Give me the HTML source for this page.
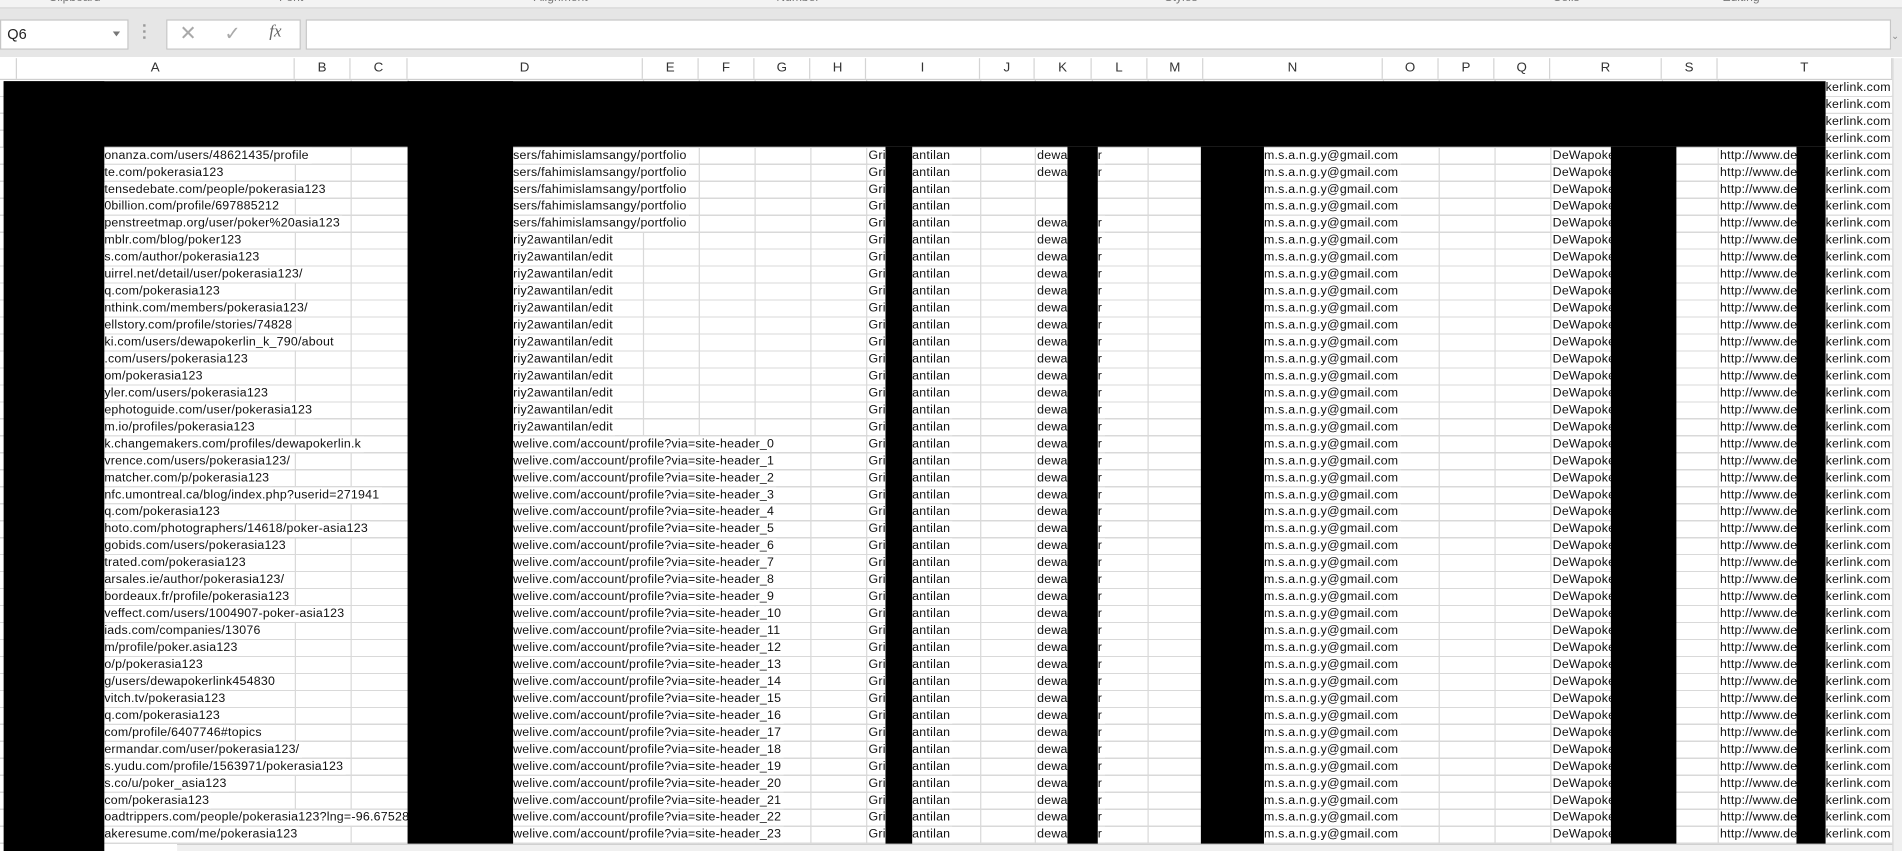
<!DOCTYPE html>
<html><head><meta charset="utf-8">
<style>
html,body{margin:0;padding:0;width:1902px;height:851px;overflow:hidden;background:#fff;}
#s{position:absolute;left:0;top:0;width:1568px;height:702px;transform-origin:0 0;transform:scale(1.21301,1.2123);font-family:"Liberation Sans",sans-serif;background:#fff;overflow:hidden;}
.abs{position:absolute;}
#rib{left:0;top:0;width:1568px;height:6px;background:#f3f3f3;border-bottom:1px solid #d6d6d6;}
#rib span{position:absolute;top:-7px;font-size:10px;color:#777;}
#gap{left:0;top:7px;width:1568px;height:40px;background:#e6e6e6;}
#nb{left:0;top:16px;width:104px;height:23px;background:#fff;border:1px solid #c6c6c6;font-size:12px;line-height:23px;text-indent:5px;color:#222;}
#nb i{position:absolute;right:6px;top:9px;border-left:3px solid transparent;border-right:3px solid transparent;border-top:4px solid #777;}
#fb{left:137px;top:16px;width:109px;height:23px;background:#fff;border:1px solid #c6c6c6;}
#fi{left:252px;top:16px;width:1305px;height:23px;background:#fff;border:1px solid #c6c6c6;}
#hdr{left:0;top:48px;width:1560px;height:17px;background:#fff;border-bottom:1px solid #cfcfcf;}
.ch{position:absolute;top:0;height:17px;line-height:17px;text-align:center;font-size:11px;color:#333;border-right:1px solid #d4d4d4;box-sizing:border-box;}
#grid{left:0;top:66px;width:1560px;height:636px;background-image:repeating-linear-gradient(to bottom,transparent 0,transparent 13px,#d9d9d9 13px,#d9d9d9 14px);}
.vl{position:absolute;top:66px;width:1px;height:636px;background:#d9d9d9;}
.r{position:absolute;left:0;width:1560px;height:13px;font-size:10.2px;line-height:13px;color:#111;letter-spacing:0.2px;}
.r span{position:absolute;top:0;background:#fff;white-space:nowrap;padding-right:2px;}
.a{left:86px}.d{left:423px}.i1{left:716px}.i2{left:752px}.k1{left:855px}.k2{left:905px}.n{left:1042px}.rr{left:1280px}.t1{left:1418px}.t2{left:1505px}
.b{position:absolute;background:#000;}
#vs{left:1560px;top:48px;width:8px;height:654px;background:#f0f0f0;border-left:1px solid #d6d6d6;}
#hs{left:146px;top:696px;width:1414px;height:6px;background:#f0f0f0;border-top:1px solid #cfcfcf;}
</style></head><body><div id="s">
<div id="rib" class="abs"><span style="left:40px">Clipboard</span><span style="left:230px">Font</span><span style="left:440px">Alignment</span><span style="left:640px">Number</span><span style="left:960px">Styles</span><span style="left:1280px">Cells</span><span style="left:1420px">Editing</span></div>
<div id="gap" class="abs"></div>
<div id="nb" class="abs">Q6<i></i></div>
<div class="abs" style="left:118px;top:20px;width:2px;height:2px;background:#999;box-shadow:0 5px 0 #999,0 10px 0 #999"></div>
<div id="fb" class="abs"><span class="abs" style="left:10px;top:1px;font-size:17px;color:#aaa">&#x2715;</span><span class="abs" style="left:47px;top:1px;font-size:16px;color:#aaa">&#x2713;</span><span class="abs" style="left:84px;top:2px;font-size:14px;color:#666;font-style:italic;font-family:'Liberation Serif',serif">fx</span></div>
<div id="fi" class="abs"></div>
<div class="abs" style="left:1559px;top:25px;font-size:8px;color:#888">&#x2304;</div>
<div id="hdr" class="abs">
<div class="ch" style="left:0;width:14px;"></div>
<div class="ch" style="left:14px;width:229px">A</div><div class="ch" style="left:243px;width:46px">B</div><div class="ch" style="left:289px;width:47px">C</div><div class="ch" style="left:336px;width:194px">D</div><div class="ch" style="left:530px;width:46px">E</div><div class="ch" style="left:576px;width:46px">F</div><div class="ch" style="left:622px;width:46px">G</div><div class="ch" style="left:668px;width:46px">H</div><div class="ch" style="left:714px;width:94px">I</div><div class="ch" style="left:808px;width:45px">J</div><div class="ch" style="left:853px;width:47px">K</div><div class="ch" style="left:900px;width:46px">L</div><div class="ch" style="left:946px;width:46px">M</div><div class="ch" style="left:992px;width:148px">N</div><div class="ch" style="left:1140px;width:46px">O</div><div class="ch" style="left:1186px;width:46px">P</div><div class="ch" style="left:1232px;width:46px">Q</div><div class="ch" style="left:1278px;width:92px">R</div><div class="ch" style="left:1370px;width:46px">S</div><div class="ch" style="left:1416px;width:144px">T</div>
</div>
<div id="grid" class="abs"></div>
<div class="vl" style="left:243px"></div><div class="vl" style="left:289px"></div><div class="vl" style="left:336px"></div><div class="vl" style="left:530px"></div><div class="vl" style="left:576px"></div><div class="vl" style="left:622px"></div><div class="vl" style="left:668px"></div><div class="vl" style="left:714px"></div><div class="vl" style="left:808px"></div><div class="vl" style="left:853px"></div><div class="vl" style="left:900px"></div><div class="vl" style="left:946px"></div><div class="vl" style="left:992px"></div><div class="vl" style="left:1140px"></div><div class="vl" style="left:1186px"></div><div class="vl" style="left:1232px"></div><div class="vl" style="left:1278px"></div><div class="vl" style="left:1370px"></div><div class="vl" style="left:1416px"></div><div class="vl" style="left:1559px"></div>

<div class="r" style="top:66px"><span class="t2">kerlink.com</span></div>
<div class="r" style="top:80px"><span class="t2">kerlink.com</span></div>
<div class="r" style="top:94px"><span class="t2">kerlink.com</span></div>
<div class="r" style="top:108px"><span class="t2">kerlink.com</span></div>

<div class="r" style="top:122px"><span class="a">onanza.com/users/48621435/profile</span><span class="d">sers/fahimislamsangy/portfolio</span><span class="i1">Gri</span><span class="i2">antilan</span><span class="k1">dewa</span><span class="k2">r</span><span class="n">m.s.a.n.g.y@gmail.com</span><span class="rr">DeWapoke</span><span class="t1">http://www.de</span><span class="t2">kerlink.com</span></div>
<div class="r" style="top:136px"><span class="a">te.com/pokerasia123</span><span class="d">sers/fahimislamsangy/portfolio</span><span class="i1">Gri</span><span class="i2">antilan</span><span class="k1">dewa</span><span class="k2">r</span><span class="n">m.s.a.n.g.y@gmail.com</span><span class="rr">DeWapoke</span><span class="t1">http://www.de</span><span class="t2">kerlink.com</span></div>
<div class="r" style="top:150px"><span class="a">tensedebate.com/people/pokerasia123</span><span class="d">sers/fahimislamsangy/portfolio</span><span class="i1">Gri</span><span class="i2">antilan</span><span class="n">m.s.a.n.g.y@gmail.com</span><span class="rr">DeWapoke</span><span class="t1">http://www.de</span><span class="t2">kerlink.com</span></div>
<div class="r" style="top:164px"><span class="a">0billion.com/profile/697885212</span><span class="d">sers/fahimislamsangy/portfolio</span><span class="i1">Gri</span><span class="i2">antilan</span><span class="n">m.s.a.n.g.y@gmail.com</span><span class="rr">DeWapoke</span><span class="t1">http://www.de</span><span class="t2">kerlink.com</span></div>
<div class="r" style="top:178px"><span class="a">penstreetmap.org/user/poker%20asia123</span><span class="d">sers/fahimislamsangy/portfolio</span><span class="i1">Gri</span><span class="i2">antilan</span><span class="k1">dewa</span><span class="k2">r</span><span class="n">m.s.a.n.g.y@gmail.com</span><span class="rr">DeWapoke</span><span class="t1">http://www.de</span><span class="t2">kerlink.com</span></div>
<div class="r" style="top:192px"><span class="a">mblr.com/blog/poker123</span><span class="d">riy2awantilan/edit</span><span class="i1">Gri</span><span class="i2">antilan</span><span class="k1">dewa</span><span class="k2">r</span><span class="n">m.s.a.n.g.y@gmail.com</span><span class="rr">DeWapoke</span><span class="t1">http://www.de</span><span class="t2">kerlink.com</span></div>
<div class="r" style="top:206px"><span class="a">s.com/author/pokerasia123</span><span class="d">riy2awantilan/edit</span><span class="i1">Gri</span><span class="i2">antilan</span><span class="k1">dewa</span><span class="k2">r</span><span class="n">m.s.a.n.g.y@gmail.com</span><span class="rr">DeWapoke</span><span class="t1">http://www.de</span><span class="t2">kerlink.com</span></div>
<div class="r" style="top:220px"><span class="a">uirrel.net/detail/user/pokerasia123/</span><span class="d">riy2awantilan/edit</span><span class="i1">Gri</span><span class="i2">antilan</span><span class="k1">dewa</span><span class="k2">r</span><span class="n">m.s.a.n.g.y@gmail.com</span><span class="rr">DeWapoke</span><span class="t1">http://www.de</span><span class="t2">kerlink.com</span></div>
<div class="r" style="top:234px"><span class="a">q.com/pokerasia123</span><span class="d">riy2awantilan/edit</span><span class="i1">Gri</span><span class="i2">antilan</span><span class="k1">dewa</span><span class="k2">r</span><span class="n">m.s.a.n.g.y@gmail.com</span><span class="rr">DeWapoke</span><span class="t1">http://www.de</span><span class="t2">kerlink.com</span></div>
<div class="r" style="top:248px"><span class="a">nthink.com/members/pokerasia123/</span><span class="d">riy2awantilan/edit</span><span class="i1">Gri</span><span class="i2">antilan</span><span class="k1">dewa</span><span class="k2">r</span><span class="n">m.s.a.n.g.y@gmail.com</span><span class="rr">DeWapoke</span><span class="t1">http://www.de</span><span class="t2">kerlink.com</span></div>
<div class="r" style="top:262px"><span class="a">ellstory.com/profile/stories/74828</span><span class="d">riy2awantilan/edit</span><span class="i1">Gri</span><span class="i2">antilan</span><span class="k1">dewa</span><span class="k2">r</span><span class="n">m.s.a.n.g.y@gmail.com</span><span class="rr">DeWapoke</span><span class="t1">http://www.de</span><span class="t2">kerlink.com</span></div>
<div class="r" style="top:276px"><span class="a">ki.com/users/dewapokerlin_k_790/about</span><span class="d">riy2awantilan/edit</span><span class="i1">Gri</span><span class="i2">antilan</span><span class="k1">dewa</span><span class="k2">r</span><span class="n">m.s.a.n.g.y@gmail.com</span><span class="rr">DeWapoke</span><span class="t1">http://www.de</span><span class="t2">kerlink.com</span></div>
<div class="r" style="top:290px"><span class="a">.com/users/pokerasia123</span><span class="d">riy2awantilan/edit</span><span class="i1">Gri</span><span class="i2">antilan</span><span class="k1">dewa</span><span class="k2">r</span><span class="n">m.s.a.n.g.y@gmail.com</span><span class="rr">DeWapoke</span><span class="t1">http://www.de</span><span class="t2">kerlink.com</span></div>
<div class="r" style="top:304px"><span class="a">om/pokerasia123</span><span class="d">riy2awantilan/edit</span><span class="i1">Gri</span><span class="i2">antilan</span><span class="k1">dewa</span><span class="k2">r</span><span class="n">m.s.a.n.g.y@gmail.com</span><span class="rr">DeWapoke</span><span class="t1">http://www.de</span><span class="t2">kerlink.com</span></div>
<div class="r" style="top:318px"><span class="a">yler.com/users/pokerasia123</span><span class="d">riy2awantilan/edit</span><span class="i1">Gri</span><span class="i2">antilan</span><span class="k1">dewa</span><span class="k2">r</span><span class="n">m.s.a.n.g.y@gmail.com</span><span class="rr">DeWapoke</span><span class="t1">http://www.de</span><span class="t2">kerlink.com</span></div>
<div class="r" style="top:332px"><span class="a">ephotoguide.com/user/pokerasia123</span><span class="d">riy2awantilan/edit</span><span class="i1">Gri</span><span class="i2">antilan</span><span class="k1">dewa</span><span class="k2">r</span><span class="n">m.s.a.n.g.y@gmail.com</span><span class="rr">DeWapoke</span><span class="t1">http://www.de</span><span class="t2">kerlink.com</span></div>
<div class="r" style="top:346px"><span class="a">m.io/profiles/pokerasia123</span><span class="d">riy2awantilan/edit</span><span class="i1">Gri</span><span class="i2">antilan</span><span class="k1">dewa</span><span class="k2">r</span><span class="n">m.s.a.n.g.y@gmail.com</span><span class="rr">DeWapoke</span><span class="t1">http://www.de</span><span class="t2">kerlink.com</span></div>
<div class="r" style="top:360px"><span class="a">k.changemakers.com/profiles/dewapokerlin.k</span><span class="d">welive.com/account/profile?via=site-header_0</span><span class="i1">Gri</span><span class="i2">antilan</span><span class="k1">dewa</span><span class="k2">r</span><span class="n">m.s.a.n.g.y@gmail.com</span><span class="rr">DeWapoke</span><span class="t1">http://www.de</span><span class="t2">kerlink.com</span></div>
<div class="r" style="top:374px"><span class="a">vrence.com/users/pokerasia123/</span><span class="d">welive.com/account/profile?via=site-header_1</span><span class="i1">Gri</span><span class="i2">antilan</span><span class="k1">dewa</span><span class="k2">r</span><span class="n">m.s.a.n.g.y@gmail.com</span><span class="rr">DeWapoke</span><span class="t1">http://www.de</span><span class="t2">kerlink.com</span></div>
<div class="r" style="top:388px"><span class="a">matcher.com/p/pokerasia123</span><span class="d">welive.com/account/profile?via=site-header_2</span><span class="i1">Gri</span><span class="i2">antilan</span><span class="k1">dewa</span><span class="k2">r</span><span class="n">m.s.a.n.g.y@gmail.com</span><span class="rr">DeWapoke</span><span class="t1">http://www.de</span><span class="t2">kerlink.com</span></div>
<div class="r" style="top:402px"><span class="a">nfc.umontreal.ca/blog/index.php?userid=271941</span><span class="d">welive.com/account/profile?via=site-header_3</span><span class="i1">Gri</span><span class="i2">antilan</span><span class="k1">dewa</span><span class="k2">r</span><span class="n">m.s.a.n.g.y@gmail.com</span><span class="rr">DeWapoke</span><span class="t1">http://www.de</span><span class="t2">kerlink.com</span></div>
<div class="r" style="top:416px"><span class="a">q.com/pokerasia123</span><span class="d">welive.com/account/profile?via=site-header_4</span><span class="i1">Gri</span><span class="i2">antilan</span><span class="k1">dewa</span><span class="k2">r</span><span class="n">m.s.a.n.g.y@gmail.com</span><span class="rr">DeWapoke</span><span class="t1">http://www.de</span><span class="t2">kerlink.com</span></div>
<div class="r" style="top:430px"><span class="a">hoto.com/photographers/14618/poker-asia123</span><span class="d">welive.com/account/profile?via=site-header_5</span><span class="i1">Gri</span><span class="i2">antilan</span><span class="k1">dewa</span><span class="k2">r</span><span class="n">m.s.a.n.g.y@gmail.com</span><span class="rr">DeWapoke</span><span class="t1">http://www.de</span><span class="t2">kerlink.com</span></div>
<div class="r" style="top:444px"><span class="a">gobids.com/users/pokerasia123</span><span class="d">welive.com/account/profile?via=site-header_6</span><span class="i1">Gri</span><span class="i2">antilan</span><span class="k1">dewa</span><span class="k2">r</span><span class="n">m.s.a.n.g.y@gmail.com</span><span class="rr">DeWapoke</span><span class="t1">http://www.de</span><span class="t2">kerlink.com</span></div>
<div class="r" style="top:458px"><span class="a">trated.com/pokerasia123</span><span class="d">welive.com/account/profile?via=site-header_7</span><span class="i1">Gri</span><span class="i2">antilan</span><span class="k1">dewa</span><span class="k2">r</span><span class="n">m.s.a.n.g.y@gmail.com</span><span class="rr">DeWapoke</span><span class="t1">http://www.de</span><span class="t2">kerlink.com</span></div>
<div class="r" style="top:472px"><span class="a">arsales.ie/author/pokerasia123/</span><span class="d">welive.com/account/profile?via=site-header_8</span><span class="i1">Gri</span><span class="i2">antilan</span><span class="k1">dewa</span><span class="k2">r</span><span class="n">m.s.a.n.g.y@gmail.com</span><span class="rr">DeWapoke</span><span class="t1">http://www.de</span><span class="t2">kerlink.com</span></div>
<div class="r" style="top:486px"><span class="a">bordeaux.fr/profile/pokerasia123</span><span class="d">welive.com/account/profile?via=site-header_9</span><span class="i1">Gri</span><span class="i2">antilan</span><span class="k1">dewa</span><span class="k2">r</span><span class="n">m.s.a.n.g.y@gmail.com</span><span class="rr">DeWapoke</span><span class="t1">http://www.de</span><span class="t2">kerlink.com</span></div>
<div class="r" style="top:500px"><span class="a">veffect.com/users/1004907-poker-asia123</span><span class="d">welive.com/account/profile?via=site-header_10</span><span class="i1">Gri</span><span class="i2">antilan</span><span class="k1">dewa</span><span class="k2">r</span><span class="n">m.s.a.n.g.y@gmail.com</span><span class="rr">DeWapoke</span><span class="t1">http://www.de</span><span class="t2">kerlink.com</span></div>
<div class="r" style="top:514px"><span class="a">iads.com/companies/13076</span><span class="d">welive.com/account/profile?via=site-header_11</span><span class="i1">Gri</span><span class="i2">antilan</span><span class="k1">dewa</span><span class="k2">r</span><span class="n">m.s.a.n.g.y@gmail.com</span><span class="rr">DeWapoke</span><span class="t1">http://www.de</span><span class="t2">kerlink.com</span></div>
<div class="r" style="top:528px"><span class="a">m/profile/poker.asia123</span><span class="d">welive.com/account/profile?via=site-header_12</span><span class="i1">Gri</span><span class="i2">antilan</span><span class="k1">dewa</span><span class="k2">r</span><span class="n">m.s.a.n.g.y@gmail.com</span><span class="rr">DeWapoke</span><span class="t1">http://www.de</span><span class="t2">kerlink.com</span></div>
<div class="r" style="top:542px"><span class="a">o/p/pokerasia123</span><span class="d">welive.com/account/profile?via=site-header_13</span><span class="i1">Gri</span><span class="i2">antilan</span><span class="k1">dewa</span><span class="k2">r</span><span class="n">m.s.a.n.g.y@gmail.com</span><span class="rr">DeWapoke</span><span class="t1">http://www.de</span><span class="t2">kerlink.com</span></div>
<div class="r" style="top:556px"><span class="a">g/users/dewapokerlink454830</span><span class="d">welive.com/account/profile?via=site-header_14</span><span class="i1">Gri</span><span class="i2">antilan</span><span class="k1">dewa</span><span class="k2">r</span><span class="n">m.s.a.n.g.y@gmail.com</span><span class="rr">DeWapoke</span><span class="t1">http://www.de</span><span class="t2">kerlink.com</span></div>
<div class="r" style="top:570px"><span class="a">vitch.tv/pokerasia123</span><span class="d">welive.com/account/profile?via=site-header_15</span><span class="i1">Gri</span><span class="i2">antilan</span><span class="k1">dewa</span><span class="k2">r</span><span class="n">m.s.a.n.g.y@gmail.com</span><span class="rr">DeWapoke</span><span class="t1">http://www.de</span><span class="t2">kerlink.com</span></div>
<div class="r" style="top:584px"><span class="a">q.com/pokerasia123</span><span class="d">welive.com/account/profile?via=site-header_16</span><span class="i1">Gri</span><span class="i2">antilan</span><span class="k1">dewa</span><span class="k2">r</span><span class="n">m.s.a.n.g.y@gmail.com</span><span class="rr">DeWapoke</span><span class="t1">http://www.de</span><span class="t2">kerlink.com</span></div>
<div class="r" style="top:598px"><span class="a">com/profile/6407746#topics</span><span class="d">welive.com/account/profile?via=site-header_17</span><span class="i1">Gri</span><span class="i2">antilan</span><span class="k1">dewa</span><span class="k2">r</span><span class="n">m.s.a.n.g.y@gmail.com</span><span class="rr">DeWapoke</span><span class="t1">http://www.de</span><span class="t2">kerlink.com</span></div>
<div class="r" style="top:612px"><span class="a">ermandar.com/user/pokerasia123/</span><span class="d">welive.com/account/profile?via=site-header_18</span><span class="i1">Gri</span><span class="i2">antilan</span><span class="k1">dewa</span><span class="k2">r</span><span class="n">m.s.a.n.g.y@gmail.com</span><span class="rr">DeWapoke</span><span class="t1">http://www.de</span><span class="t2">kerlink.com</span></div>
<div class="r" style="top:626px"><span class="a">s.yudu.com/profile/1563971/pokerasia123</span><span class="d">welive.com/account/profile?via=site-header_19</span><span class="i1">Gri</span><span class="i2">antilan</span><span class="k1">dewa</span><span class="k2">r</span><span class="n">m.s.a.n.g.y@gmail.com</span><span class="rr">DeWapoke</span><span class="t1">http://www.de</span><span class="t2">kerlink.com</span></div>
<div class="r" style="top:640px"><span class="a">s.co/u/poker_asia123</span><span class="d">welive.com/account/profile?via=site-header_20</span><span class="i1">Gri</span><span class="i2">antilan</span><span class="k1">dewa</span><span class="k2">r</span><span class="n">m.s.a.n.g.y@gmail.com</span><span class="rr">DeWapoke</span><span class="t1">http://www.de</span><span class="t2">kerlink.com</span></div>
<div class="r" style="top:654px"><span class="a">com/pokerasia123</span><span class="d">welive.com/account/profile?via=site-header_21</span><span class="i1">Gri</span><span class="i2">antilan</span><span class="k1">dewa</span><span class="k2">r</span><span class="n">m.s.a.n.g.y@gmail.com</span><span class="rr">DeWapoke</span><span class="t1">http://www.de</span><span class="t2">kerlink.com</span></div>
<div class="r" style="top:668px"><span class="a" style="width:250px;overflow:hidden">oadtrippers.com/people/pokerasia123?lng=-96.67528</span><span class="d">welive.com/account/profile?via=site-header_22</span><span class="i1">Gri</span><span class="i2">antilan</span><span class="k1">dewa</span><span class="k2">r</span><span class="n">m.s.a.n.g.y@gmail.com</span><span class="rr">DeWapoke</span><span class="t1">http://www.de</span><span class="t2">kerlink.com</span></div>
<div class="r" style="top:682px"><span class="a">akeresume.com/me/pokerasia123</span><span class="d">welive.com/account/profile?via=site-header_23</span><span class="i1">Gri</span><span class="i2">antilan</span><span class="k1">dewa</span><span class="k2">r</span><span class="n">m.s.a.n.g.y@gmail.com</span><span class="rr">DeWapoke</span><span class="t1">http://www.de</span><span class="t2">kerlink.com</span></div>

<div class="b" style="left:3px;top:67px;width:1502px;height:54px"></div>
<div class="b" style="left:3px;top:67px;width:83px;height:635px"></div>
<div class="b" style="left:336px;top:67px;width:87px;height:635px"></div>
<div class="b" style="left:730px;top:121px;width:22px;height:581px"></div>
<div class="b" style="left:880px;top:121px;width:25px;height:581px"></div>
<div class="b" style="left:990px;top:121px;width:52px;height:581px"></div>
<div class="b" style="left:1328px;top:121px;width:54px;height:581px"></div>
<div class="b" style="left:1481px;top:121px;width:24px;height:581px"></div>
<div id="vs" class="abs"></div>
<div id="hs" class="abs"></div>
</div></body></html>
